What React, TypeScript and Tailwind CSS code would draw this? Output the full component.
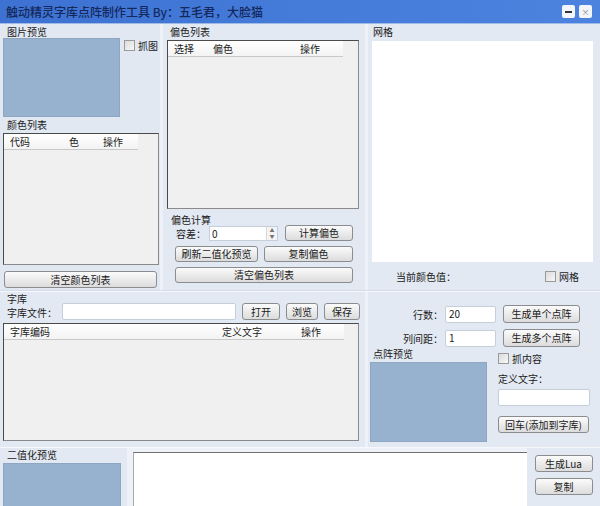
import type { ReactNode } from 'react';

const font = { fontFamily: '"Noto Sans CJK SC", "Noto Sans", sans-serif' };

function Btn({ w, h = 17, children }: { w: number; h?: number; children: ReactNode }) {
  return (
    <div
      className="flex items-center justify-center rounded-[3px] border border-[#8a8c8f] bg-gradient-to-b from-[#fbfbfb] to-[#dcdcdc] text-[10px] leading-none text-[#1a1a1a]"
      style={{ width: w, height: h }}
    >
      {children}
    </div>
  );
}

function Check({ label }: { label: string }) {
  return (
    <div className="flex items-center gap-[3px] text-[10px] leading-none">
      <div className="h-[11px] w-[11px] border border-[#9a9a9a] bg-gradient-to-br from-[#dcdcdc] to-[#f7f7f7]" />
      <span>{label}</span>
    </div>
  );
}

function ListView({ w, h, headerW, cols }: { w: number; h: number; headerW: number; cols: [string, number][] }) {
  return (
    <div
      className="border border-[#4a4a4a] border-b-[#8a8a8a] border-r-[#8a8a8a] bg-[#f0f0f0]"
      style={{ width: w, height: h }}
    >
      <div
        className="relative h-[16px] border-b border-[#c9c9c9] bg-gradient-to-b from-white to-[#f3f3f3] text-[10px] leading-[16px]"
        style={{ width: headerW }}
      >
        {cols.map(([t, x]) => (
          <span key={t} className="absolute top-0" style={{ left: x }}>
            {t}
          </span>
        ))}
      </div>
    </div>
  );
}

function Input({ w, h = 17, value }: { w: number; h?: number; value?: string }) {
  return (
    <div
      className="flex items-center rounded-[2px] border border-[#c5cedb] bg-white pl-[3px] text-[10px] leading-none"
      style={{ width: w, height: h }}
    >
      {value}
    </div>
  );
}

export default function App() {
  return (
    <div className="h-[506px] w-[600px] overflow-hidden bg-[#eef2f8] text-[#1a1a1a]" style={font}>
      {/* title bar */}
      <div className="flex h-[24px] items-center justify-between border-b border-[#9fbbe6] bg-gradient-to-r from-[#3d72d2] to-[#4c83df] pl-[6px] pr-[8px]">
        <span className="text-[12px] font-medium text-[#14285c]">触动精灵字库点阵制作工具 By：五毛君，大脸猫</span>
        <div className="flex gap-[4px]">
          <div className="flex h-[13px] w-[13px] items-center justify-center rounded-[2px] bg-[#f2f5fa]">
            <div className="h-[2px] w-[7px] bg-[#333]" />
          </div>
          <div className="flex h-[13px] w-[13px] items-center justify-center rounded-[2px] bg-[#f2f5fa] text-[8px] leading-none text-[#888]">
            ×
          </div>
        </div>
      </div>

      {/* top section */}
      <div className="flex h-[266px]">
        {/* left */}
        <div className="w-[163px] border-r-[3px] border-[#eef2f8] bg-[#e1e8f2]">
          <div className="mt-[2px] pl-[7px] text-[10px] leading-[12px]">图片预览</div>
          <div className="flex">
            <div className="ml-[3px] h-[79px] w-[117px] border border-[#8da6c2] bg-[#97b2cf]" />
            <div className="ml-[4px] mt-[2px]">
              <Check label="抓图" />
            </div>
          </div>
          <div className="mt-[2px] pl-[7px] text-[10px] leading-[12px]">颜色列表</div>
          <div className="ml-[3px] mt-[2px]">
            <ListView w={156} h={132} headerW={134} cols={[['代码', 6], ['色', 65], ['操作', 99]]} />
          </div>
          <div className="ml-[4px] mt-[6px]">
            <Btn w={153}>清空颜色列表</Btn>
          </div>
        </div>

        {/* middle */}
        <div className="w-[202px] bg-[#e3e9f2]">
          <div className="mt-[2px] pl-[7px] text-[10px] leading-[12px]">偏色列表</div>
          <div className="ml-[4px] mt-[2px]">
            <ListView w={192} h={169} headerW={175} cols={[['选择', 6], ['偏色', 45], ['操作', 132]]} />
          </div>
          <div className="mt-[5px] pl-[8px] text-[10px] leading-[12px]">偏色计算</div>
          <div className="mt-[-1px] flex items-center">
            <span className="ml-[13px] w-[33px] text-[10px]">容差：</span>
            <div className="flex h-[15px] w-[69px] border border-[#c5cedb] bg-white">
              <span className="flex-1 pl-[2px] text-[10px] leading-[13px]">0</span>
              <div className="flex w-[11px] flex-col items-center border-l border-[#d5d9df] bg-[#f4f4f4] text-[5px] leading-[6px] text-[#777]">
                <span>▲</span>
                <span>▼</span>
              </div>
            </div>
            <div className="ml-[7px]">
              <Btn w={68} h={16}>计算偏色</Btn>
            </div>
          </div>
          <div className="mt-[5px] flex gap-[6px] pl-[12px]">
            <Btn w={83} h={16}>刷新二值化预览</Btn>
            <Btn w={89} h={16}>复制偏色</Btn>
          </div>
          <div className="mt-[5px] pl-[12px]">
            <Btn w={178} h={16}>清空偏色列表</Btn>
          </div>
        </div>

        {/* right */}
        <div className="flex-1 border-l-[3px] border-[#eef2f8] bg-[#e3e9f2]">
          <div className="mt-[2px] pl-[5px] text-[10px] leading-[12px]">网格</div>
          <div className="ml-[4px] mt-[3px] h-[221px] w-[221px] bg-white" />
          <div className="mt-[7px] flex items-center">
            <span className="ml-[28px] text-[10px]">当前颜色值：</span>
            <div className="ml-auto mr-[21px]">
              <Check label="网格" />
            </div>
          </div>
        </div>
      </div>

      {/* separator */}
      <div className="h-[2px] border-t border-[#d3dceb] bg-[#f6f8fc]" />

      {/* middle section */}
      <div className="flex h-[155px]">
        <div className="w-[365px] bg-[#e3e9f2]">
          <div className="flex items-end">
            <div className="pl-[7px] text-[10px] leading-[14px]">
              <div>字库</div>
              <div>字库文件：</div>
            </div>
            <div className="ml-[5px] flex items-center gap-[6px]">
              <Input w={174} />
              <Btn w={38}>打开</Btn>
              <Btn w={32}>浏览</Btn>
              <Btn w={36}>保存</Btn>
            </div>
          </div>
          <div className="ml-[3px] mt-[3px]">
            <ListView w={356} h={118} headerW={340} cols={[['字库编码', 6], ['定义文字', 218], ['操作', 297]]} />
          </div>
        </div>

        <div className="flex-1 border-l-[3px] border-[#eef2f8] bg-[#e3e9f2] text-[10px]">
          <div className="mt-[13px] flex items-center">
            <span className="w-[75px] text-right">行数：</span>
            <div className="ml-[2px]">
              <Input w={51} value="20" />
            </div>
            <div className="ml-[7px]">
              <Btn w={77} h={18}>生成单个点阵</Btn>
            </div>
          </div>
          <div className="mt-[6px] flex items-center">
            <span className="w-[75px] text-right">列间距：</span>
            <div className="ml-[2px]">
              <Input w={51} value="1" />
            </div>
            <div className="ml-[7px]">
              <Btn w={77} h={18}>生成多个点阵</Btn>
            </div>
          </div>
          <div className="flex">
            <div>
              <div className="mt-[1px] pl-[5px] leading-[12px]">点阵预览</div>
              <div className="ml-[2px] mt-[2px] h-[80px] w-[117px] border border-[#8da6c2] bg-[#97b2cf]" />
            </div>
            <div className="ml-[11px] mt-[6px]">
              <Check label="抓内容" />
              <div className="mt-[9px] leading-[12px]">定义文字：</div>
              <div className="mt-[4px]">
                <Input w={92} />
              </div>
              <div className="mt-[10px]">
                <Btn w={91}>回车(添加到字库)</Btn>
              </div>
            </div>
          </div>
        </div>
      </div>

      {/* bottom section */}
      <div className="flex h-[59px] border-t border-[#f6f8fc]">
        <div className="w-[127px] bg-[#e3e9f2]">
          <div className="mt-[1px] pl-[7px] text-[10px] leading-[12px]">二值化预览</div>
          <div className="ml-[3px] mt-[2px] h-[60px] w-[118px] border border-[#8da6c2] bg-[#97b2cf]" />
        </div>
        <div className="ml-[6px] mt-[4px] w-[394px] border-l border-t border-[#6f6f6f] border-l-[#a9a9a9] bg-white" />
        <div className="flex flex-1 flex-col items-center gap-[6px] bg-[#e3e9f2] pt-[7px]">
          <Btn w={58}>生成Lua</Btn>
          <Btn w={58}>复制</Btn>
        </div>
      </div>
    </div>
  );
}
